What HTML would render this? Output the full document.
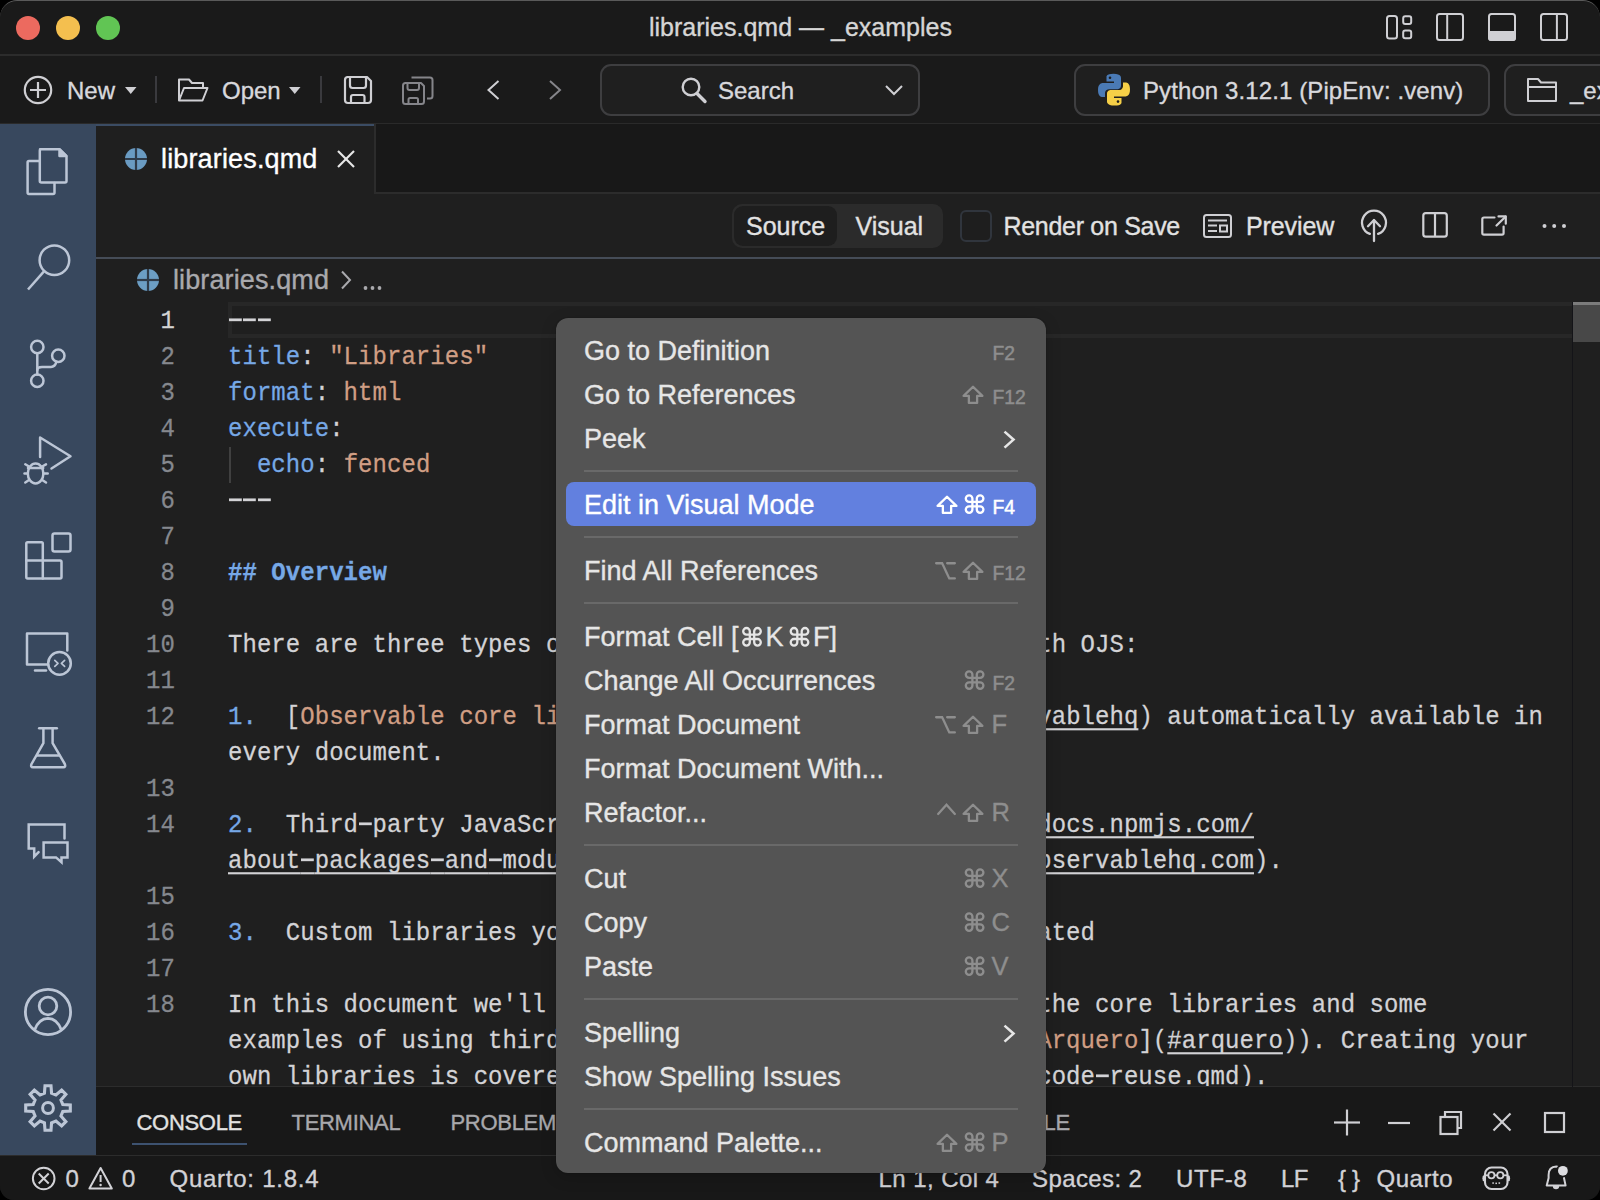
<!DOCTYPE html>
<html><head><meta charset="utf-8">
<style>
*{box-sizing:border-box;margin:0;padding:0}
html,body{width:1600px;height:1200px;overflow:hidden;background:#000}
body{font-family:"Liberation Sans",sans-serif;color:#cccccc;position:relative}
.win{position:absolute;left:0;top:0;width:1600px;height:1200px;background:#1a1a1a;border-radius:17px 17px 14px 14px;overflow:hidden}
.abs{position:absolute}
.t{position:absolute;white-space:pre;line-height:1;-webkit-text-stroke:0.35px currentColor}
.mono{font-family:"Liberation Mono",monospace}
.hy{-webkit-text-fill-color:transparent;-webkit-text-stroke-width:0;background:linear-gradient(currentColor,currentColor) no-repeat 0.8px 11.2px/12.8px 2.6px}
svg.layer{position:absolute;left:0;top:0;width:1600px;height:1200px;overflow:visible}
</style></head><body>
<div class="win">
<div class="abs" style="left:0px;top:0px;width:1600px;height:55px;background:#1a1a1a"></div>
<div class="abs" style="left:0px;top:54px;width:1600px;height:2px;background:#2c2c2c"></div>
<div class="abs" style="left:0px;top:56px;width:1600px;height:68px;background:#1a1a1a"></div>
<div class="abs" style="left:0px;top:123px;width:1600px;height:1px;background:#2a2a2a"></div>
<div class="abs" style="left:0px;top:124px;width:96px;height:1032px;background:#38485e"></div>
<div class="abs" style="left:96px;top:124px;width:1504px;height:68px;background:#181818"></div>
<div class="abs" style="left:96px;top:192px;width:1504px;height:2px;background:#2c2c2c"></div>
<div class="abs" style="left:96px;top:124px;width:278px;height:70px;background:#1f1f1f"></div>
<div class="abs" style="left:96px;top:124px;width:278px;height:2px;background:#3b4c64"></div>
<div class="abs" style="left:374px;top:124px;width:2px;height:70px;background:#2c2c2c"></div>
<div class="abs" style="left:96px;top:194px;width:1504px;height:893px;background:#1f1f1f"></div>
<div class="abs" style="left:96px;top:257px;width:1504px;height:1.5px;background:#454c57"></div>
<div class="abs" style="left:96px;top:1086px;width:1504px;height:70px;background:#181818"></div>
<div class="abs" style="left:96px;top:1086px;width:1504px;height:1px;background:#2c2c2c"></div>
<div class="abs" style="left:0px;top:1156px;width:1600px;height:44px;background:#181818"></div>
<div class="abs" style="left:0px;top:1155px;width:1600px;height:1px;background:#2c2c2c"></div>
<div class="abs" style="left:16px;top:16px;width:24px;height:24px;border-radius:50%;background:#ec6a5f"></div>
<div class="abs" style="left:56px;top:16px;width:24px;height:24px;border-radius:50%;background:#f4bf4f"></div>
<div class="abs" style="left:96px;top:16px;width:24px;height:24px;border-radius:50%;background:#61c554"></div>
<div class="t " style="left:649px;top:15.24px;font-size:25px;color:#d6d6d6;">libraries.qmd — _examples</div>
<div class="t " style="left:67px;top:78.98px;font-size:24px;color:#d8d8dc;">New</div>
<div class="abs" style="left:155px;top:76px;width:2px;height:27px;background:#3a3a3e"></div>
<div class="t " style="left:222px;top:78.98px;font-size:24px;color:#d8d8dc;">Open</div>
<div class="abs" style="left:320px;top:76px;width:2px;height:27px;background:#3a3a3e"></div>
<div class="abs" style="left:600px;top:64px;width:320px;height:52px;border:2px solid #3e3e40;border-radius:11px;background:#1f1f1f"></div>
<div class="t " style="left:718px;top:78.98px;font-size:24px;color:#d8d8dc;">Search</div>
<div class="abs" style="left:1074px;top:64px;width:416px;height:52px;border:2px solid #3e3e40;border-radius:11px;background:#1f1f1f"></div>
<div class="t " style="left:1143px;top:78.58px;font-size:24px;color:#d8d8dc;letter-spacing:0.1px;">Python 3.12.1 (PipEnv: .venv)</div>
<div class="abs" style="left:1504px;top:64px;width:120px;height:52px;border:2px solid #3e3e40;border-radius:11px;background:#1f1f1f"></div>
<div class="t " style="left:1570px;top:78.68px;font-size:24px;color:#d8d8dc;">_ex</div>
<div class="t " style="left:161px;top:146.14px;font-size:27px;color:#ffffff;letter-spacing:0.15px;">libraries.qmd</div>
<div class="abs" style="left:732px;top:204px;width:211px;height:44px;background:#2b2b2b;border-radius:10px"></div>
<div class="abs" style="left:734px;top:206px;width:103px;height:40px;background:#1e1e1e;border-radius:9px"></div>
<div class="t " style="left:746px;top:213.84px;font-size:25px;color:#e2e2e2;">Source</div>
<div class="t " style="left:855.5px;top:213.84px;font-size:25px;color:#e2e2e2;">Visual</div>
<div class="abs" style="left:959.5px;top:210px;width:32px;height:32px;border:2px solid #30353d;border-radius:6px;background:#1e1e1e"></div>
<div class="t " style="left:1003.5px;top:213.84px;font-size:25px;color:#e2e2e2;letter-spacing:-0.3px;">Render on Save</div>
<div class="t " style="left:1246px;top:213.84px;font-size:25px;color:#e2e2e2;letter-spacing:-0.1px;">Preview</div>
<div class="t " style="left:173px;top:267.14px;font-size:27px;color:#a9a9ad;letter-spacing:0.12px;">libraries.qmd</div>
<div class="abs" style="left:228px;top:302px;width:1344px;height:36px;border:4px solid #272727;border-right:none"></div>
<div class="abs" style="left:1571.5px;top:302px;width:1.5px;height:785px;background:#141418"></div>
<div class="abs" style="left:1573px;top:302px;width:27px;height:40px;background:#484848"></div>
<div class="abs" style="left:1573px;top:302px;width:27px;height:3px;background:#7c7c7c"></div>
<div class="abs mono" style="left:0;top:193px;width:1572px;height:893px;overflow:hidden;font-size:24px;letter-spacing:0.0477px"><div class="abs" style="left:0;top:-193px;width:1600px;height:1200px">
<div class="abs" style="left:98px;width:77px;text-align:right;top:303.5px;height:36px;line-height:36px;color:#d4d4d4;transform:scaleY(1.06);transform-origin:0 24.4px;-webkit-text-stroke:0.25px">1</div>
<div class="abs" style="left:98px;width:77px;text-align:right;top:339.5px;height:36px;line-height:36px;color:#85888e;transform:scaleY(1.06);transform-origin:0 24.4px;-webkit-text-stroke:0.25px">2</div>
<div class="abs" style="left:98px;width:77px;text-align:right;top:375.5px;height:36px;line-height:36px;color:#85888e;transform:scaleY(1.06);transform-origin:0 24.4px;-webkit-text-stroke:0.25px">3</div>
<div class="abs" style="left:98px;width:77px;text-align:right;top:411.5px;height:36px;line-height:36px;color:#85888e;transform:scaleY(1.06);transform-origin:0 24.4px;-webkit-text-stroke:0.25px">4</div>
<div class="abs" style="left:98px;width:77px;text-align:right;top:447.5px;height:36px;line-height:36px;color:#85888e;transform:scaleY(1.06);transform-origin:0 24.4px;-webkit-text-stroke:0.25px">5</div>
<div class="abs" style="left:98px;width:77px;text-align:right;top:483.5px;height:36px;line-height:36px;color:#85888e;transform:scaleY(1.06);transform-origin:0 24.4px;-webkit-text-stroke:0.25px">6</div>
<div class="abs" style="left:98px;width:77px;text-align:right;top:519.5px;height:36px;line-height:36px;color:#85888e;transform:scaleY(1.06);transform-origin:0 24.4px;-webkit-text-stroke:0.25px">7</div>
<div class="abs" style="left:98px;width:77px;text-align:right;top:555.5px;height:36px;line-height:36px;color:#85888e;transform:scaleY(1.06);transform-origin:0 24.4px;-webkit-text-stroke:0.25px">8</div>
<div class="abs" style="left:98px;width:77px;text-align:right;top:591.5px;height:36px;line-height:36px;color:#85888e;transform:scaleY(1.06);transform-origin:0 24.4px;-webkit-text-stroke:0.25px">9</div>
<div class="abs" style="left:98px;width:77px;text-align:right;top:627.5px;height:36px;line-height:36px;color:#85888e;transform:scaleY(1.06);transform-origin:0 24.4px;-webkit-text-stroke:0.25px">10</div>
<div class="abs" style="left:98px;width:77px;text-align:right;top:663.5px;height:36px;line-height:36px;color:#85888e;transform:scaleY(1.06);transform-origin:0 24.4px;-webkit-text-stroke:0.25px">11</div>
<div class="abs" style="left:98px;width:77px;text-align:right;top:699.5px;height:36px;line-height:36px;color:#85888e;transform:scaleY(1.06);transform-origin:0 24.4px;-webkit-text-stroke:0.25px">12</div>
<div class="abs" style="left:98px;width:77px;text-align:right;top:771.5px;height:36px;line-height:36px;color:#85888e;transform:scaleY(1.06);transform-origin:0 24.4px;-webkit-text-stroke:0.25px">13</div>
<div class="abs" style="left:98px;width:77px;text-align:right;top:807.5px;height:36px;line-height:36px;color:#85888e;transform:scaleY(1.06);transform-origin:0 24.4px;-webkit-text-stroke:0.25px">14</div>
<div class="abs" style="left:98px;width:77px;text-align:right;top:879.5px;height:36px;line-height:36px;color:#85888e;transform:scaleY(1.06);transform-origin:0 24.4px;-webkit-text-stroke:0.25px">15</div>
<div class="abs" style="left:98px;width:77px;text-align:right;top:915.5px;height:36px;line-height:36px;color:#85888e;transform:scaleY(1.06);transform-origin:0 24.4px;-webkit-text-stroke:0.25px">16</div>
<div class="abs" style="left:98px;width:77px;text-align:right;top:951.5px;height:36px;line-height:36px;color:#85888e;transform:scaleY(1.06);transform-origin:0 24.4px;-webkit-text-stroke:0.25px">17</div>
<div class="abs" style="left:98px;width:77px;text-align:right;top:987.5px;height:36px;line-height:36px;color:#85888e;transform:scaleY(1.06);transform-origin:0 24.4px;-webkit-text-stroke:0.25px">18</div>
<div class="abs" style="left:228px;top:303.5px;height:36px;line-height:36px;white-space:pre;transform:scaleY(1.06);transform-origin:0 24.4px;-webkit-text-stroke:0.25px"><span style="color:#d3d3d6;"><span class="hy">-</span><span class="hy">-</span><span class="hy">-</span></span></div>
<div class="abs" style="left:228px;top:339.5px;height:36px;line-height:36px;white-space:pre;transform:scaleY(1.06);transform-origin:0 24.4px;-webkit-text-stroke:0.25px"><span style="color:#76a8e6;">title</span><span style="color:#d3d3d6;">: </span><span style="color:#d09e84;">"Libraries"</span></div>
<div class="abs" style="left:228px;top:375.5px;height:36px;line-height:36px;white-space:pre;transform:scaleY(1.06);transform-origin:0 24.4px;-webkit-text-stroke:0.25px"><span style="color:#76a8e6;">format</span><span style="color:#d3d3d6;">: </span><span style="color:#d09e84;">html</span></div>
<div class="abs" style="left:228px;top:411.5px;height:36px;line-height:36px;white-space:pre;transform:scaleY(1.06);transform-origin:0 24.4px;-webkit-text-stroke:0.25px"><span style="color:#76a8e6;">execute</span><span style="color:#d3d3d6;">:</span></div>
<div class="abs" style="left:228px;top:447.5px;height:36px;line-height:36px;white-space:pre;transform:scaleY(1.06);transform-origin:0 24.4px;-webkit-text-stroke:0.25px"><span style="color:#d3d3d6;">  </span><span style="color:#76a8e6;">echo</span><span style="color:#d3d3d6;">: </span><span style="color:#d09e84;">fenced</span></div>
<div class="abs" style="left:228px;top:483.5px;height:36px;line-height:36px;white-space:pre;transform:scaleY(1.06);transform-origin:0 24.4px;-webkit-text-stroke:0.25px"><span style="color:#d3d3d6;"><span class="hy">-</span><span class="hy">-</span><span class="hy">-</span></span></div>
<div class="abs" style="left:228px;top:555.5px;height:36px;line-height:36px;white-space:pre;transform:scaleY(1.06);transform-origin:0 24.4px;-webkit-text-stroke:0.25px"><span style="color:#76a8e6;font-weight:bold;">## Overview</span></div>
<div class="abs" style="left:228px;top:627.5px;height:36px;line-height:36px;white-space:pre;transform:scaleY(1.06);transform-origin:0 24.4px;-webkit-text-stroke:0.25px"><span style="color:#d3d3d6;">There are three types of JavaScript libraries for use with OJS:</span></div>
<div class="abs" style="left:228px;top:699.5px;height:36px;line-height:36px;white-space:pre;transform:scaleY(1.06);transform-origin:0 24.4px;-webkit-text-stroke:0.25px"><span style="color:#76a8e6;">1.</span><span style="color:#d3d3d6;">  [</span><span style="color:#d09e84;">Observable core libraries</span><span style="color:#d3d3d6;">](</span><span style="color:#d3d3d6;text-decoration:underline;text-decoration-thickness:2px;text-underline-offset:4px;text-decoration-skip-ink:none;">h_tps://github.com/observablehq</span><span style="color:#d3d3d6;">) automatically available in</span></div>
<div class="abs" style="left:228px;top:735.5px;height:36px;line-height:36px;white-space:pre;transform:scaleY(1.06);transform-origin:0 24.4px;-webkit-text-stroke:0.25px"><span style="color:#d3d3d6;">every document.</span></div>
<div class="abs" style="left:228px;top:807.5px;height:36px;line-height:36px;white-space:pre;transform:scaleY(1.06);transform-origin:0 24.4px;-webkit-text-stroke:0.25px"><span style="color:#76a8e6;">2.</span><span style="color:#d3d3d6;">  Third<span class="hy">-</span>party JavaScript libraries from [npm](</span><span style="color:#d3d3d6;text-decoration:underline;text-decoration-thickness:2px;text-underline-offset:4px;text-decoration-skip-ink:none;">h_tps://docs.npmjs.com/</span></div>
<div class="abs" style="left:228px;top:843.5px;height:36px;line-height:36px;white-space:pre;transform:scaleY(1.06);transform-origin:0 24.4px;-webkit-text-stroke:0.25px"><span style="color:#d3d3d6;text-decoration:underline;text-decoration-thickness:2px;text-underline-offset:4px;text-decoration-skip-ink:none;">about<span class="hy">-</span>packages<span class="hy">-</span>and<span class="hy">-</span>modules</span><span style="color:#d3d3d6;">) and [observablehq](</span><span style="color:#d3d3d6;text-decoration:underline;text-decoration-thickness:2px;text-underline-offset:4px;text-decoration-skip-ink:none;">h_tps://observablehq.com</span><span style="color:#d3d3d6;">).</span></div>
<div class="abs" style="left:228px;top:915.5px;height:36px;line-height:36px;white-space:pre;transform:scaleY(1.06);transform-origin:0 24.4px;-webkit-text-stroke:0.25px"><span style="color:#76a8e6;">3.</span><span style="color:#d3d3d6;">  Custom libraries you've written yourself or have created</span></div>
<div class="abs" style="left:228px;top:987.5px;height:36px;line-height:36px;white-space:pre;transform:scaleY(1.06);transform-origin:0 24.4px;-webkit-text-stroke:0.25px"><span style="color:#d3d3d6;">In this document we'll provide a quick in<span class="hy">-</span>depth look at the core libraries and some</span></div>
<div class="abs" style="left:228px;top:1023.5px;height:36px;line-height:36px;white-space:pre;transform:scaleY(1.06);transform-origin:0 24.4px;-webkit-text-stroke:0.25px"><span style="color:#d3d3d6;">examples of using third<span class="hy">-</span>party libraries (e.g. [D3.js], [</span><span style="color:#d09e84;">Arquero</span><span style="color:#d3d3d6;">](</span><span style="color:#d3d3d6;text-decoration:underline;text-decoration-thickness:2px;text-underline-offset:4px;text-decoration-skip-ink:none;">#arquero</span><span style="color:#d3d3d6;">)). Creating your</span></div>
<div class="abs" style="left:228px;top:1059.5px;height:36px;line-height:36px;white-space:pre;transform:scaleY(1.06);transform-origin:0 24.4px;-webkit-text-stroke:0.25px"><span style="color:#d3d3d6;">own libraries is covered in the article on [Code Reuse](</span><span style="color:#d3d3d6;text-decoration:underline;text-decoration-thickness:2px;text-underline-offset:4px;text-decoration-skip-ink:none;">code<span class="hy">-</span>reuse.qmd</span><span style="color:#d3d3d6;">).</span></div>
</div></div>
<div class="abs" style="left:229px;top:447px;width:2px;height:36px;background:#404040"></div>
<div class="t " style="left:136.5px;top:1111.88px;font-size:22px;color:#e2e2e2;letter-spacing:-0.3px;">CONSOLE</div>
<div class="abs" style="left:132px;top:1143px;width:115px;height:2px;background:#3d5270"></div>
<div class="t " style="left:291.5px;top:1111.88px;font-size:22px;color:#a8a8ac;letter-spacing:-0.3px;">TERMINAL</div>
<div class="t " style="left:450.5px;top:1111.88px;font-size:22px;color:#a8a8ac;letter-spacing:-0.3px;">PROBLEMS</div>
<div class="t " style="left:1045px;top:1111.88px;font-size:22px;color:#a8a8ac;letter-spacing:-0.3px;display:none">OUTPUT</div>
<div class="abs" style="left:1046px;top:1100px;width:60px;height:40px;overflow:hidden">
<div class="t " style="left:-2.5px;top:11.88px;font-size:22px;color:#a8a8ac;letter-spacing:-0.3px;">LE</div>
</div>
<div class="t " style="left:65.5px;top:1166.68px;font-size:24px;color:#d2d2d6;">0</div>
<div class="t " style="left:122px;top:1166.68px;font-size:24px;color:#d2d2d6;">0</div>
<div class="t " style="left:169.5px;top:1166.68px;font-size:24px;color:#d2d2d6;letter-spacing:0.75px;">Quarto: 1.8.4</div>
<div class="t " style="left:878.5px;top:1166.68px;font-size:24px;color:#d2d2d6;letter-spacing:0.43px;">Ln 1, Col 4</div>
<div class="t " style="left:1032px;top:1166.68px;font-size:24px;color:#d2d2d6;letter-spacing:0.4px;">Spaces: 2</div>
<div class="t " style="left:1176px;top:1166.68px;font-size:24px;color:#d2d2d6;letter-spacing:0.7px;">UTF-8</div>
<div class="t " style="left:1281px;top:1166.68px;font-size:24px;color:#d2d2d6;letter-spacing:-0.5px;">LF</div>
<div class="t " style="left:1338px;top:1166.68px;font-size:24px;color:#d2d2d6;letter-spacing:-0.3px;">{ }</div>
<div class="t " style="left:1376.5px;top:1166.68px;font-size:24px;color:#d2d2d6;letter-spacing:0.55px;">Quarto</div>
<svg class="layer" viewBox="0 0 1600 1200"><g fill="none" stroke="#cfcfd3" stroke-width="2"><rect x="1387" y="16" width="10" height="22.5" rx="2.5"/><rect x="1403.2" y="16.3" width="8" height="7.6" rx="2"/><rect x="1403.2" y="30.6" width="8" height="7.6" rx="2"/><rect x="1437" y="14" width="26" height="26" rx="2.5"/><line x1="1447.2" y1="14" x2="1447.2" y2="40"/><rect x="1489" y="14" width="26" height="26" rx="2.5"/><rect x="1541" y="14" width="26" height="26" rx="2.5"/><line x1="1556.9" y1="14" x2="1556.9" y2="40"/></g><path d="M1488.2,30.9 H1515.9 V38 Q1515.9,40.9 1513,40.9 H1491.1 Q1488.2,40.9 1488.2,38 Z" fill="#cfcfd3"/><g fill="none" stroke="#cfcfd3" stroke-width="2.2"><circle cx="38" cy="90" r="13.2"/><line x1="30" y1="90" x2="46" y2="90"/><line x1="38" y1="82" x2="38" y2="98"/></g><path d="M125,87 L136.5,87 L130.75,94 Z" fill="#cfcfd3"/><g fill="none" stroke="#cfcfd3" stroke-width="2" stroke-linejoin="round"><path d="M179,100.5 V79.5 H189 L192,83 H203 V88"/><path d="M179,100.5 L184,88 H207.5 L202.5,100.5 Z"/></g><path d="M289,87 L300.5,87 L294.75,94 Z" fill="#cfcfd3"/><g fill="none" stroke="#cfcfd3" stroke-width="2.2" stroke-linejoin="round"><path d="M347,77 H367 L371,81 V100 Q371,103 368,103 H348 Q345,103 345,100 V80 Q345,77 348,77 Z"/><path d="M350,77.5 V85.5 Q350,88 352.5,88 H363.5 Q366,88 366,85.5 V77.5"/><path d="M351,103 V97 Q351,95 353,95 H362.5 Q364.5,95 364.5,97 V103"/></g><g fill="none" stroke="#85858a" stroke-width="2" stroke-linejoin="round"><path d="M405,83 H421 L424,86 V101.5 Q424,104 421.5,104 H405.5 Q403,104 403,101.5 V85.5 Q403,83 405.5,83 Z"/><path d="M407.5,83.5 V88 Q407.5,90 409.5,90 H417 Q419,90 419,88 V83.5"/><path d="M408.5,104 V99.5 Q408.5,98 410,98 H416.5 Q418,98 418,99.5 V104"/><path d="M411.5,77.5 H430 Q432.5,77.5 432.5,80 V96 Q432.5,98.5 430,98.5 H427"/></g><path d="M498.5,81 L488.5,90 L498.5,99" fill="none" stroke="#cfcfd3" stroke-width="2"/><path d="M550,81 L560,90 L550,99" fill="none" stroke="#85858a" stroke-width="2"/><g fill="none" stroke="#cfcfd3" stroke-width="2.4" stroke-linecap="round"><circle cx="691" cy="87" r="8.3"/><line x1="697" y1="93.5" x2="705" y2="101.5" stroke-width="3.4"/></g><path d="M886,86 L894,94 L902,86" fill="none" stroke="#cfcfd3" stroke-width="2"/><g fill="none" stroke="#cfcfd3" stroke-width="2" stroke-linejoin="round"><path d="M1528,101 V79 H1538 L1541,82.5 H1556 V101 Z"/><line x1="1528" y1="87" x2="1556" y2="87"/></g><g><path d="M1113.5,73.8 C1106,73.8 1106.5,77 1106.5,77 V81.5 H1114 V83 H1103 C1103,83 1098,82.5 1098,90 C1098,97.5 1102.3,97 1102.3,97 H1105 V93.5 C1105,93.5 1105,89.3 1109,89.3 H1117 C1117,89.3 1121,89.4 1121,85.5 V78 C1121,78 1121.5,73.8 1113.5,73.8 Z" fill="#4a7ab5"/><path d="M1114.5,105.6 C1122,105.6 1121.5,102.4 1121.5,102.4 V97.9 H1114 V96.4 H1125 C1125,96.4 1130,96.9 1130,89.4 C1130,81.9 1125.7,82.4 1125.7,82.4 H1123 V85.9 C1123,85.9 1123,90.1 1119,90.1 H1111 C1111,90.1 1107,90 1107,93.9 V101.4 C1107,101.4 1106.5,105.6 1114.5,105.6 Z" fill="#f5cf47"/><circle cx="1110" cy="77.8" r="1.3" fill="#1e1e1e"/><circle cx="1118" cy="101.6" r="1.3" fill="#1e1e1e"/></g><g fill="none" stroke="#bcc6d6" stroke-width="2.5" stroke-linejoin="round" stroke-linecap="round"><path d="M40,149.2 H59.5 L66.5,156.2 V181 Q66.5,182.5 65,182.5 H41.5 Q39.8,182.5 39.8,181 V150.7 Q39.8,149.2 41.3,149.2 Z"/><path d="M59.5,149.5 V156 H66.2 Z" fill="#bcc6d6"/><path d="M39.5,161 H29 Q27.6,161 27.6,162.5 V192.5 Q27.6,194 29,194 H53 Q54.5,194 54.5,192.5 V183"/><circle cx="54.4" cy="260.2" r="14.8"/><line x1="44" y1="271.3" x2="28" y2="289.5" stroke-linecap="butt"/><circle cx="37.3" cy="347" r="6.2"/><circle cx="58.3" cy="355.8" r="6.2"/><circle cx="37.3" cy="380.8" r="6.2"/><line x1="37.3" y1="353.2" x2="37.3" y2="374.6"/><path d="M37.3,370 Q37.3,367 42,367 H51 Q55,367 56.5,361.7"/><path d="M40.1,457 V437.5 L70.5,456.3 L51.5,468.5"/><ellipse cx="35.6" cy="473.5" rx="7.8" ry="10"/><line x1="28" y1="468" x2="43.2" y2="468"/><line x1="24.5" y1="473.5" x2="27.8" y2="473.5"/><line x1="43.4" y1="473.5" x2="47.7" y2="473.5"/><line x1="25.3" y1="464.3" x2="29" y2="466.5"/><line x1="46" y1="464.3" x2="42.2" y2="466.5"/><line x1="25.3" y1="482.5" x2="29" y2="480"/><line x1="46" y1="482.5" x2="42.2" y2="480"/><path d="M26.3,543.5 Q26.3,542.2 27.6,542.2 H41.5 Q42.8,542.2 42.8,543.5 V560.5 H60 Q61.5,560.5 61.5,562 V577 Q61.5,578.5 60,578.5 H27.6 Q26.3,578.5 26.3,577 Z"/><line x1="26.3" y1="560.5" x2="42.8" y2="560.5"/><line x1="42.8" y1="560.5" x2="42.8" y2="578.5"/><rect x="52.5" y="533.5" width="18" height="18" rx="2"/><path d="M48,664.5 H27 V633.5 H67.3 V650.5"/><line x1="35" y1="670.5" x2="46" y2="670.5"/><circle cx="59.5" cy="663.4" r="11.3"/><path d="M54.8,660.3 L58,663.3 L54.8,666.3" stroke-width="1.7"/><path d="M64.6,660.3 L61.4,663.3 L64.6,666.3" stroke-width="1.7"/><line x1="39.2" y1="728.2" x2="56.8" y2="728.2"/><path d="M43.4,729 V743.2 L31.5,764 Q30.3,767.3 33,767.3 H63.3 Q66,767.3 64.8,764 L52.6,743.2 V729"/><line x1="37" y1="755.5" x2="59.3" y2="755.5"/><path d="M64.5,838.5 V824.6 H28.7 V848.5 H34.2 V856.7 L38.6,852.2" stroke-linejoin="miter"/><path d="M43.6,842.5 H67.5 V857.4 H61.5 V862.2 L56,857.4 H43.6 Z" stroke-linejoin="miter"/><g stroke-width="2.8"><circle cx="48" cy="1012" r="22.6"/><circle cx="48" cy="1006" r="8.8"/><path d="M34.8,1029.5 Q39,1018.5 48,1018.3 Q57,1018.5 61.2,1029.5"/></g><circle cx="48" cy="1108" r="5.4" stroke-width="3"/></g><path d="M45.00,1085.70 L51.00,1085.70 L51.55,1093.22 L55.94,1095.04 L61.65,1090.11 L65.89,1094.35 L60.96,1100.06 L62.78,1104.45 L70.30,1105.00 L70.30,1111.00 L62.78,1111.55 L60.96,1115.94 L65.89,1121.65 L61.65,1125.89 L55.94,1120.96 L51.55,1122.78 L51.00,1130.30 L45.00,1130.30 L44.45,1122.78 L40.06,1120.96 L34.35,1125.89 L30.11,1121.65 L35.04,1115.94 L33.22,1111.55 L25.70,1111.00 L25.70,1105.00 L33.22,1104.45 L35.04,1100.06 L30.11,1094.35 L34.35,1090.11 L40.06,1095.04 L44.45,1093.22 Z" fill="none" stroke="#bcc6d6" stroke-width="3.1" stroke-linejoin="miter"/><g><circle cx="136" cy="159" r="11" fill="#6a9bc2"/><line x1="136" y1="148" x2="136" y2="170" stroke="#2f3b49" stroke-width="2.2"/><line x1="125" y1="159" x2="147" y2="159" stroke="#2f3b49" stroke-width="2.2"/></g><g stroke="#e8e8e8" stroke-width="2.2"><line x1="338" y1="151" x2="354" y2="167"/><line x1="354" y1="151" x2="338" y2="167"/></g><g fill="none" stroke="#cfcfd3" stroke-width="2"><rect x="1204" y="215" width="27" height="22" rx="2.5"/><line x1="1208" y1="220.5" x2="1227" y2="220.5"/><line x1="1208" y1="225.5" x2="1217" y2="225.5"/><line x1="1208" y1="231" x2="1217" y2="231"/><rect x="1220" y="225.5" width="7" height="6"/></g><g fill="none" stroke="#cfcfd3" stroke-width="2.3" stroke-linecap="round" stroke-linejoin="round"><path d="M1369.9,233.9 A12,12 0 1 1 1378.1,233.9"/><line x1="1374" y1="220.5" x2="1374" y2="241"/><path d="M1368,226.2 L1374,220 L1380,226.2"/></g><g fill="none" stroke="#cfcfd3" stroke-width="2.2"><rect x="1423.3" y="213.2" width="23.5" height="23.5" rx="2.5"/><line x1="1435" y1="213.2" x2="1435" y2="236.7"/></g><g fill="none" stroke="#cfcfd3" stroke-width="2.2" stroke-linecap="round" stroke-linejoin="round"><path d="M1494.5,217.5 H1484 Q1482.3,217.5 1482.3,219.2 V233 Q1482.3,234.6 1484,234.6 H1502 Q1503.6,234.6 1503.6,233 V226.5"/><path d="M1498.5,216.4 H1505.8 V223.7"/><line x1="1505.5" y1="216.7" x2="1496.5" y2="225.5"/></g><circle cx="1544.5" cy="226" r="2" fill="#cfcfd3"/><circle cx="1554.2" cy="226" r="2" fill="#cfcfd3"/><circle cx="1564" cy="226" r="2" fill="#cfcfd3"/><g><circle cx="148" cy="280" r="11" fill="#6c9ec4"/><line x1="148" y1="269" x2="148" y2="291" stroke="#2f3b49" stroke-width="2.2"/><line x1="137" y1="280" x2="159" y2="280" stroke="#2f3b49" stroke-width="2.2"/></g><path d="M342,271.5 L350,280 L342,288.5" fill="none" stroke="#a9a9ad" stroke-width="2"/><circle cx="365.5" cy="288" r="1.9" fill="#a9a9ad"/><circle cx="372.5" cy="288" r="1.9" fill="#a9a9ad"/><circle cx="379.5" cy="288" r="1.9" fill="#a9a9ad"/><g fill="none" stroke="#cfcfd3" stroke-width="2.2"><line x1="1334" y1="1122.5" x2="1360" y2="1122.5"/><line x1="1347" y1="1109.5" x2="1347" y2="1135.5"/><line x1="1388" y1="1123" x2="1410" y2="1123"/><rect x="1440.5" y="1117" width="17" height="17"/><path d="M1445,1116 V1112 H1461 V1128 H1457.5"/><line x1="1493.5" y1="1113.5" x2="1510.5" y2="1130.5"/><line x1="1510.5" y1="1113.5" x2="1493.5" y2="1130.5"/><rect x="1545" y="1113" width="19" height="19"/></g><g fill="none" stroke="#d2d2d6" stroke-width="2"><circle cx="43.7" cy="1178.5" r="10.8"/><line x1="38.7" y1="1173.5" x2="48.7" y2="1183.5"/><line x1="48.7" y1="1173.5" x2="38.7" y2="1183.5"/><path d="M100.6,1168 L111.8,1188.5 H89.4 Z" stroke-linejoin="round"/><line x1="100.6" y1="1175" x2="100.6" y2="1182"/></g><circle cx="100.6" cy="1185" r="1.2" fill="#d2d2d6"/><g fill="none" stroke="#d2d2d6" stroke-width="2.1"><rect x="1485" y="1167.5" width="22.5" height="21.5" rx="6.5"/><line x1="1485" y1="1175.3" x2="1507.5" y2="1175.3" stroke-width="1.8"/></g><g fill="#d2d2d6"><ellipse cx="1483.8" cy="1178.2" rx="1.4" ry="3"/><ellipse cx="1508.7" cy="1178.2" rx="1.4" ry="3"/><rect x="1492.3" y="1182.3" width="1.6" height="1.5"/><rect x="1495.4" y="1182.6" width="1.6" height="1.5"/><rect x="1498.5" y="1182.3" width="1.6" height="1.5"/></g><g fill="#181818" stroke="#d2d2d6" stroke-width="1.8"><circle cx="1491.4" cy="1175.3" r="3.1"/><circle cx="1500.3" cy="1175.3" r="3.1"/></g><g fill="none" stroke="#d2d2d6" stroke-width="2" stroke-linejoin="round"><path d="M1546.7,1185.6 H1565.6 L1564,1178 V1175 Q1564,1166.6 1556.3,1166.4 Q1548.6,1166.6 1548.6,1175 V1178 Z"/></g><path d="M1552.8,1186 A3.2,3.2 0 0 0 1559.2,1186 Z" fill="#d2d2d6"/><circle cx="1562.9" cy="1170.8" r="6.8" fill="#181818"/><circle cx="1562.9" cy="1170.8" r="4.9" fill="#dcdce0"/></svg>
<div class="abs" style="left:556px;top:318px;width:490px;height:855px;background:#545454;border-radius:12px;box-shadow:0 0 1px rgba(0,0,0,.5),0 4px 16px rgba(0,0,0,.18)"></div>
<div class="abs" style="left:566px;top:482px;width:470px;height:44px;background:#6280df;border-radius:8px"></div>
<div class="abs" style="left:584px;top:470px;width:434px;height:2px;background:#696969"></div>
<div class="abs" style="left:584px;top:536px;width:434px;height:2px;background:#696969"></div>
<div class="abs" style="left:584px;top:602px;width:434px;height:2px;background:#696969"></div>
<div class="abs" style="left:584px;top:844px;width:434px;height:2px;background:#696969"></div>
<div class="abs" style="left:584px;top:998px;width:434px;height:2px;background:#696969"></div>
<div class="abs" style="left:584px;top:1108px;width:434px;height:2px;background:#696969"></div>
<div class="t " style="left:584px;top:337.74px;font-size:27px;color:#e6e6e6;">Go to Definition</div>
<div class="t " style="left:992.5px;top:343.76px;font-size:19.3px;color:#8e8e8e;-webkit-text-stroke:0.5px #8e8e8e">F2</div>
<div class="t " style="left:584px;top:381.74px;font-size:27px;color:#e6e6e6;">Go to References</div>
<div class="t " style="left:992.5px;top:387.76px;font-size:19.3px;color:#8e8e8e;-webkit-text-stroke:0.5px #8e8e8e">F12</div>
<div class="t " style="left:584px;top:425.74px;font-size:27px;color:#e6e6e6;">Peek</div>
<div class="t " style="left:584px;top:491.74px;font-size:27px;color:#ffffff;">Edit in Visual Mode</div>
<div class="t " style="left:992.5px;top:497.76px;font-size:19.3px;color:#ffffff;-webkit-text-stroke:0.5px #ffffff">F4</div>
<div class="t " style="left:584px;top:557.74px;font-size:27px;color:#e6e6e6;">Find All References</div>
<div class="t " style="left:992.5px;top:563.76px;font-size:19.3px;color:#8e8e8e;-webkit-text-stroke:0.5px #8e8e8e">F12</div>
<div class="t " style="left:584px;top:667.74px;font-size:27px;color:#e6e6e6;">Change All Occurrences</div>
<div class="t " style="left:992.5px;top:673.76px;font-size:19.3px;color:#8e8e8e;-webkit-text-stroke:0.5px #8e8e8e">F2</div>
<div class="t " style="left:584px;top:711.74px;font-size:27px;color:#e6e6e6;">Format Document</div>
<div class="t " style="left:991.5px;top:712.01px;font-size:25.5px;color:#8e8e8e;">F</div>
<div class="t " style="left:584px;top:755.74px;font-size:27px;color:#e6e6e6;">Format Document With...</div>
<div class="t " style="left:584px;top:799.74px;font-size:27px;color:#e6e6e6;">Refactor...</div>
<div class="t " style="left:991.5px;top:800.01px;font-size:25.5px;color:#8e8e8e;">R</div>
<div class="t " style="left:584px;top:865.74px;font-size:27px;color:#e6e6e6;">Cut</div>
<div class="t " style="left:991.5px;top:866.01px;font-size:25.5px;color:#8e8e8e;">X</div>
<div class="t " style="left:584px;top:909.74px;font-size:27px;color:#e6e6e6;">Copy</div>
<div class="t " style="left:991.5px;top:910.01px;font-size:25.5px;color:#8e8e8e;">C</div>
<div class="t " style="left:584px;top:953.74px;font-size:27px;color:#e6e6e6;">Paste</div>
<div class="t " style="left:991.5px;top:954.01px;font-size:25.5px;color:#8e8e8e;">V</div>
<div class="t " style="left:584px;top:1019.74px;font-size:27px;color:#e6e6e6;">Spelling</div>
<div class="t " style="left:584px;top:1063.74px;font-size:27px;color:#e6e6e6;">Show Spelling Issues</div>
<div class="t " style="left:584px;top:1129.74px;font-size:27px;color:#e6e6e6;">Command Palette...</div>
<div class="t " style="left:991.5px;top:1130.01px;font-size:25.5px;color:#8e8e8e;">P</div>
<div class="t " style="left:584px;top:623.74px;font-size:27px;color:#e6e6e6;">Format Cell [</div>
<div class="t " style="left:765.5px;top:623.74px;font-size:27px;color:#e6e6e6;">K</div>
<div class="t " style="left:813px;top:623.74px;font-size:27px;color:#e6e6e6;">F]</div>
<svg class="layer" viewBox="0 0 1600 1200"><path d="M973.00,386.71 L982.39,395.93 H977.13 V402.95 H968.87 V395.93 H963.61 Z" fill="none" stroke="#8e8e8e" stroke-width="2.3" stroke-linejoin="round"/><path d="M1004.5,431.60 L1013.5,439.60 L1004.5,447.60" fill="none" stroke="#e6e6e6" stroke-width="2.6"/><path d="M947.00,496.71 L956.39,505.93 H951.13 V512.95 H942.87 V505.93 H937.61 Z" fill="none" stroke="#ffffff" stroke-width="2.3" stroke-linejoin="round"/><path d="M972.40,498.60 V509.60 A3.30,3.30 0 1 1 969.10,506.30 H980.10 A3.30,3.30 0 1 1 976.80,509.60 V498.60 A3.30,3.30 0 1 1 980.10,501.90 H969.10 A3.30,3.30 0 1 1 972.40,498.60 Z" fill="none" stroke="#ffffff" stroke-width="2.3"/><path d="M936.15,563.25 H942.14 L949.28,578.45 H954.85 M947.18,563.25 H954.85" fill="none" stroke="#8e8e8e" stroke-width="2.3" stroke-linecap="round"/><path d="M973.00,562.71 L982.39,571.93 H977.13 V578.95 H968.87 V571.93 H963.61 Z" fill="none" stroke="#8e8e8e" stroke-width="2.3" stroke-linejoin="round"/><path d="M972.40,674.60 V685.60 A3.30,3.30 0 1 1 969.10,682.30 H980.10 A3.30,3.30 0 1 1 976.80,685.60 V674.60 A3.30,3.30 0 1 1 980.10,677.90 H969.10 A3.30,3.30 0 1 1 972.40,674.60 Z" fill="none" stroke="#8e8e8e" stroke-width="2.3"/><path d="M936.15,717.25 H942.14 L949.28,732.45 H954.85 M947.18,717.25 H954.85" fill="none" stroke="#8e8e8e" stroke-width="2.3" stroke-linecap="round"/><path d="M973.00,716.71 L982.39,725.93 H977.13 V732.95 H968.87 V725.93 H963.61 Z" fill="none" stroke="#8e8e8e" stroke-width="2.3" stroke-linejoin="round"/><path d="M938.15,813.95 L946.50,804.75 L954.85,813.95" fill="none" stroke="#8e8e8e" stroke-width="2.3" stroke-linecap="round"/><path d="M973.00,804.71 L982.39,813.93 H977.13 V820.95 H968.87 V813.93 H963.61 Z" fill="none" stroke="#8e8e8e" stroke-width="2.3" stroke-linejoin="round"/><path d="M972.40,872.60 V883.60 A3.30,3.30 0 1 1 969.10,880.30 H980.10 A3.30,3.30 0 1 1 976.80,883.60 V872.60 A3.30,3.30 0 1 1 980.10,875.90 H969.10 A3.30,3.30 0 1 1 972.40,872.60 Z" fill="none" stroke="#8e8e8e" stroke-width="2.3"/><path d="M972.40,916.60 V927.60 A3.30,3.30 0 1 1 969.10,924.30 H980.10 A3.30,3.30 0 1 1 976.80,927.60 V916.60 A3.30,3.30 0 1 1 980.10,919.90 H969.10 A3.30,3.30 0 1 1 972.40,916.60 Z" fill="none" stroke="#8e8e8e" stroke-width="2.3"/><path d="M972.40,960.60 V971.60 A3.30,3.30 0 1 1 969.10,968.30 H980.10 A3.30,3.30 0 1 1 976.80,971.60 V960.60 A3.30,3.30 0 1 1 980.10,963.90 H969.10 A3.30,3.30 0 1 1 972.40,960.60 Z" fill="none" stroke="#8e8e8e" stroke-width="2.3"/><path d="M1004.5,1025.60 L1013.5,1033.60 L1004.5,1041.60" fill="none" stroke="#e6e6e6" stroke-width="2.6"/><path d="M947.00,1134.71 L956.39,1143.93 H951.13 V1150.95 H942.87 V1143.93 H937.61 Z" fill="none" stroke="#8e8e8e" stroke-width="2.3" stroke-linejoin="round"/><path d="M972.40,1136.60 V1147.60 A3.30,3.30 0 1 1 969.10,1144.30 H980.10 A3.30,3.30 0 1 1 976.80,1147.60 V1136.60 A3.30,3.30 0 1 1 980.10,1139.90 H969.10 A3.30,3.30 0 1 1 972.40,1136.60 Z" fill="none" stroke="#8e8e8e" stroke-width="2.3"/><path d="M749.80,631.30 V642.30 A3.30,3.30 0 1 1 746.50,639.00 H757.50 A3.30,3.30 0 1 1 754.20,642.30 V631.30 A3.30,3.30 0 1 1 757.50,634.60 H746.50 A3.30,3.30 0 1 1 749.80,631.30 Z" fill="none" stroke="#e6e6e6" stroke-width="2.3"/><path d="M797.30,631.30 V642.30 A3.30,3.30 0 1 1 794.00,639.00 H805.00 A3.30,3.30 0 1 1 801.70,642.30 V631.30 A3.30,3.30 0 1 1 805.00,634.60 H794.00 A3.30,3.30 0 1 1 797.30,631.30 Z" fill="none" stroke="#e6e6e6" stroke-width="2.3"/></svg>
<div style="position:absolute;left:0;top:0;width:1600px;height:40px;border-top:1.5px solid #5a5a5a;border-radius:17px 17px 0 0;pointer-events:none"></div>
</div>
</body></html>
